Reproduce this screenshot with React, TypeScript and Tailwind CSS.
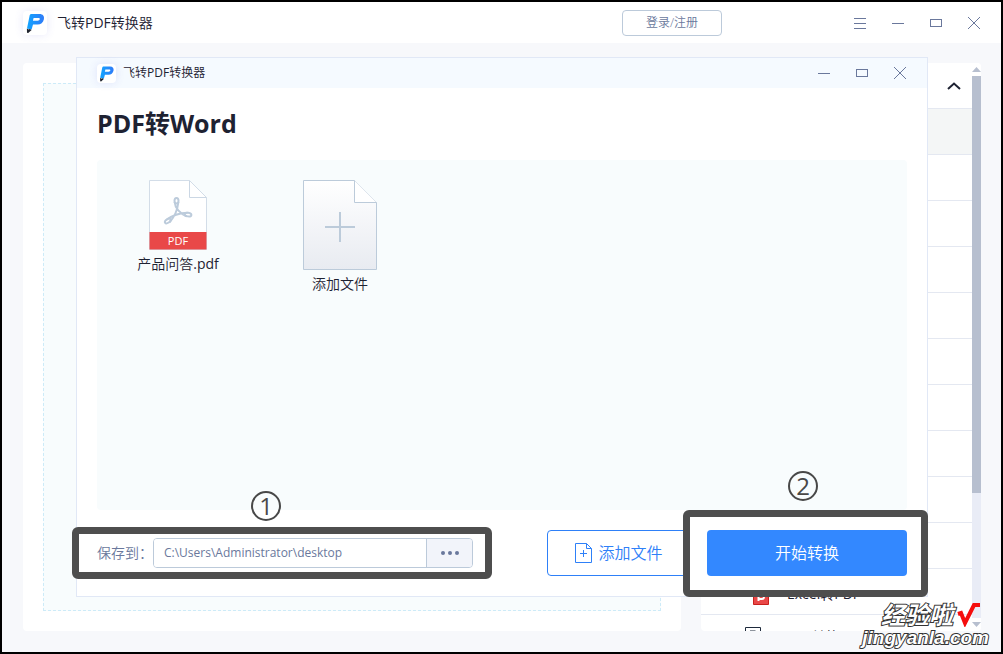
import React, { useState } from 'react';

const features = [
  { id: 'pdf-word', active: true },
  { id: 'pdf-excel' },
  { id: 'pdf-ppt' },
  { id: 'pdf-image' },
  { id: 'pdf-txt' },
  { id: 'pdf-html' },
  { id: 'word-pdf' },
  { id: 'image-pdf' },
  { id: 'ppt-pdf' },
  { id: 'txt-pdf' },
];

function AppName({ className }: { className: string }) {
  return (
    <span className={`flex-1 text-[#1e2232] ${className}`}>
      飞转<span className="font-normal">PDF</span>转换器
    </span>
  );
}

function Logo({ className }: { className: string }) {
  return (
    <span className={`block shrink-0 rounded bg-white shadow-[0_0_8px_rgba(90,90,220,0.14)] ${className}`}>
      <svg viewBox="0 0 24 24" className="h-full w-full">
        <defs>
          <linearGradient id="logo-blue" x1="0" x2="1" y1="0" y2="0">
            <stop offset="0" stopColor="#12a4ff" />
            <stop offset="1" stopColor="#2f7bf8" />
          </linearGradient>
        </defs>
        <path
          fill="url(#logo-blue)"
          fillRule="evenodd"
          d="M8.6 3H16.5C20 3 21.5 5.2 20.9 8.2C20.2 11.7 17.7 13.6 14.6 13.6H10L8.6 18.6L4 17.4L6.6 4.8C6.8 3.6 7.4 3 8.6 3ZM10.6 7L9.9 9.7H14.6C15.9 9.7 16.6 9.2 16.8 8.3C16.9 7.4 16.4 7 15.4 7Z"
        />
        <path fill="#20242f" d="M3.9 17.4L5.5 18.6L6.8 17.9L8.6 18.9L5.2 22L4 21.7Z" />
      </svg>
    </span>
  );
}

function WindowButtons({ menu = false }: { menu?: boolean }) {
  const base = 'flex h-8 w-[38px] items-center justify-center';
  return (
    <div className="flex items-center pr-2 text-[#6a789c]">
      {menu && (
        <button className={base} aria-label="菜单">
          <svg width="12" height="14" fill="none" stroke="currentColor">
            <path d="M0 2.5H12M0 7.5H12M0 12.5H12" />
          </svg>
        </button>
      )}
      <button className={base} aria-label="最小化">
        <svg width="12" height="12" fill="none" stroke="currentColor">
          <path d="M0 6.5H12" />
        </svg>
      </button>
      <button className={base} aria-label="最大化">
        <svg width="12" height="12" fill="none" stroke="currentColor">
          <rect x="0.5" y="2.5" width="11" height="7" />
        </svg>
      </button>
      <button className={base} aria-label="关闭">
        <svg width="14" height="14" fill="none" stroke="currentColor">
          <path d="M1 1L13 13M13 1L1 13" />
        </svg>
      </button>
    </div>
  );
}

function PdfFileIcon() {
  return (
    <svg width="58" height="70" viewBox="0 0 58 70">
      <path d="M0.5 0.5H40.5L57.5 17.5V69.5H0.5Z" fill="#fff" stroke="#d3dde8" />
      <path d="M40.5 0.5V17.5H57.5" fill="none" stroke="#cbd7e4" />
      <g fill="none" stroke="#bccbdb" strokeWidth="2">
        <ellipse cx="27.5" cy="20.8" rx="2" ry="2.8" />
        <ellipse cx="18.8" cy="41" rx="3.2" ry="1.8" transform="rotate(-32 18.8 41)" />
        <ellipse cx="39" cy="34.6" rx="3.4" ry="1.8" transform="rotate(8 39 34.6)" />
        <path d="M25.6 22C26 28 31 33.6 37.6 36.2M29.4 22C28.6 29 25.4 37 20.6 42.2M17 40C23 35.6 30.6 33 38.6 32.8" />
      </g>
      <rect x="0.5" y="52" width="57" height="17.5" fill="#e94848" />
      <text x="29" y="65" textAnchor="middle" fontSize="11" fontWeight="500" fill="#fff">
        PDF
      </text>
    </svg>
  );
}

function AddFileIcon() {
  return (
    <svg width="74" height="90" viewBox="0 0 74 90">
      <defs>
        <linearGradient id="sheet" x1="0" x2="0" y1="0" y2="1">
          <stop offset="0" stopColor="#fff" />
          <stop offset="1" stopColor="#e8ebf1" />
        </linearGradient>
      </defs>
      <path d="M0.5 0.5H51.5L73.5 22.5V89.5H0.5Z" fill="url(#sheet)" stroke="#bccbda" />
      <path d="M51.5 0.5V22.5H73.5" fill="#fff" stroke="#bccbda" />
      <path d="M22 47H52M37 32V62" stroke="#bccbda" strokeWidth="2" />
    </svg>
  );
}

function StepNumber({ children, className }: { children: React.ReactNode; className: string }) {
  return (
    <span
      className={`absolute flex size-[30px] items-center justify-center rounded-full border-2 border-[#484848] text-[24px] font-normal leading-6 text-[#484848] ${className}`}
    >
      {children}
    </span>
  );
}

function FeatureList() {
  return (
    <aside className="flex w-[280px] shrink-0 overflow-hidden rounded bg-white">
      <div className="relative min-w-0 flex-1">
        {/* rows run past the bottom edge and are cut off there */}
        <div className="absolute inset-0 overflow-hidden">
          <div className="flex h-[46px] items-center justify-end border-b border-[#e4e8f1] pr-[11px]">
            <button aria-label="收起">
              <svg width="14" height="8" fill="none" stroke="#1e2232" strokeWidth="2">
                <path d="M1 7L7 1.5L13 7" />
              </svg>
            </button>
          </div>
          {features.map((item) => (
            <div
              key={item.id}
              className={`h-[46px] border-b border-[#e4e8f1] ${item.active ? 'bg-[#f4f6f6]' : 'bg-white'}`}
            />
          ))}
          <div className="flex h-[46px] items-center gap-[18px] border-b border-[#e4e8f1] pl-[52px] pt-1">
            <svg width="16" height="22" viewBox="0 0 16 22">
              <path d="M0.5 0.5H15.5V21.5H0.5Z" fill="#e94848" stroke="#c8201c" />
              <path d="M5.5 18V11H9Q11 11 11 13.5T9 16H6" fill="none" stroke="#fff" strokeWidth="2" />
            </svg>
            <span className="text-[14px] font-normal leading-5 text-[#1e2232]">Excel转PDF</span>
          </div>
          <div className="flex h-[46px] items-center gap-[26px] pl-11">
            <svg width="16" height="22" viewBox="0 0 16 22" fill="none" stroke="#1e2a3c" strokeWidth="1">
              <path d="M0.5 0.5H15.5V21.5H0.5Z" />
              <path d="M5 4.5H9.5V9" strokeWidth="2" />
            </svg>
            <span className="pb-0.5 text-[14px] leading-5 text-[#1e2232]">PDF转换</span>
          </div>
        </div>
      </div>
      <div className="flex w-[9px] flex-col bg-white">
        <svg width="9" height="13" className="shrink-0">
          <path d="M0 9L4.5 4L9 9Z" fill="#b7bfcf" />
        </svg>
        <div className="flex-1 bg-[#e9ecf6]">
          <div className="h-[77%] bg-[#b7bfcf]" />
        </div>
        <svg width="9" height="13" className="shrink-0">
          <path d="M0 4L4.5 9L9 4Z" fill="#b7bfcf" />
        </svg>
      </div>
    </aside>
  );
}

function ConvertDialog() {
  const [path, setPath] = useState('C:\\Users\\Administrator\\desktop');

  return (
    <section
      role="dialog"
      aria-labelledby="dialog-title"
      className="absolute inset-y-[55px] left-[74px] right-[73px] flex flex-col border border-[#e1e8f6] bg-white"
    >
      <header className="flex h-[30px] shrink-0 items-center bg-[#f5faff] pl-5">
        <Logo className="size-[19px]" />
        <AppName className="ml-[7px] text-[12px] leading-4" />
        <WindowButtons />
      </header>

      <div className="flex min-h-0 flex-1 flex-col px-5 pb-5">
        <h1 id="dialog-title" className="h-[72px] shrink-0 text-[25px] font-bold leading-[70px] text-[#1e2232]">
          PDF转Word
        </h1>

        <div className="flex flex-1 items-start rounded bg-[#f8fcfd] pt-5 text-[14px] leading-7 text-[#1e2232]">
          <div className="flex w-[162px] flex-col items-center">
            <PdfFileIcon />
            <span>
              产品问答<span className="font-normal">.pdf</span>
            </span>
          </div>
          <button className="flex w-[162px] flex-col items-center">
            <AddFileIcon />
            <span>添加文件</span>
          </button>
        </div>

        <footer className="mt-5 flex shrink-0 items-center">
          <div className="relative flex items-center">
            <label htmlFor="save-path" className="w-14 whitespace-nowrap text-[14px] leading-5 text-[#6a789c]">
              保存到：
            </label>
            <div className="flex h-[30px] w-80 overflow-hidden rounded border border-[#bccada]">
              <input
                id="save-path"
                value={path}
                onChange={(e) => setPath(e.target.value)}
                className="min-w-0 flex-1 bg-white px-[10px] text-[12px] font-normal text-[#6a789c] outline-none"
              />
              <button
                aria-label="浏览"
                className="flex w-[46px] items-center justify-center border-l border-[#bccada] bg-[#f2f4fa]"
              >
                <svg width="18" height="4" fill="#6a789c">
                  <circle cx="2" cy="2" r="2" />
                  <circle cx="9" cy="2" r="2" />
                  <circle cx="16" cy="2" r="2" />
                </svg>
              </button>
            </div>
            <div className="pointer-events-none absolute -bottom-[11px] -left-[25px] -right-[19px] -top-[11px] rounded-md border-[7px] border-[#4e4e4e]" />
            <StepNumber className="-top-[47px] left-[154px]">1</StepNumber>
          </div>

          <button className="ml-auto flex h-[46px] w-[140px] items-center justify-center gap-[6px] rounded border border-[#2e80f8] pl-1 text-[16px] text-[#2e80f8]">
            <svg width="17" height="20" viewBox="0 0 17 20" fill="none" stroke="currentColor">
              <path d="M0.5 0.5H11.5L16.5 5.5V19.5H0.5Z" />
              <path d="M11.5 0.5V5.5H16.5M5 10.5H12M8.5 7V14" />
            </svg>
            添加文件
          </button>

          <div className="relative ml-5">
            <div className="pointer-events-none absolute -bottom-[21px] -left-6 -right-[21px] -top-5 rounded-md border-[7px] border-[#4e4e4e] bg-white" />
            <button className="relative h-[46px] w-[200px] rounded bg-[#3388ff] text-[16px] text-white">
              开始转换
            </button>
            <StepNumber className="-top-[59px] left-[81px]">2</StepNumber>
          </div>
        </footer>
      </div>
    </section>
  );
}

export default function App() {
  return (
    <div className="relative flex min-h-screen flex-col overflow-hidden border-2 border-black bg-[#f7f8fb] font-['Open_Sans','Noto_Sans_CJK_SC',sans-serif] font-[350]">
      <header className="flex h-[41px] shrink-0 items-center bg-white pl-[21px]">
        <Logo className="size-6" />
        <AppName className="ml-[10px] text-[14px] leading-5" />
        <button className="mr-[119px] h-[26px] w-[100px] rounded border border-[#bccada] text-[12px] text-[#6a789c]">
          登录/注册
        </button>
        <WindowButtons menu />
      </header>

      <main className="flex flex-1 gap-5 pb-[21px] pl-[21px] pr-5 pt-5">
        <div className="flex min-w-0 flex-1 rounded bg-white p-5">
          <div className="flex-1 border border-dashed border-[#cdebf8] bg-[#f8fcfd]" />
        </div>
        <FeatureList />
      </main>

      <ConvertDialog />

      {/* site mark */}
      <div className="absolute bottom-[3px] right-3 flex flex-col items-end font-bold italic text-white">
        <div className="flex items-center gap-1 pr-2">
          <span className="text-[24px] leading-6 [-webkit-text-stroke:2px_#333] [paint-order:stroke_fill]">
            经验啦
          </span>
          <svg width="24" height="24" viewBox="0 0 24 24" fill="none" stroke="#f50d0d" strokeWidth="4">
            <path d="M1 11L4 10L8 20L17 2H23" />
          </svg>
        </div>
        <span className="font-['Liberation_Sans',sans-serif] text-[19px] leading-[22px] [-webkit-text-stroke:2px_#333] [paint-order:stroke_fill]">
          jingyanla.com
        </span>
      </div>
    </div>
  );
}
